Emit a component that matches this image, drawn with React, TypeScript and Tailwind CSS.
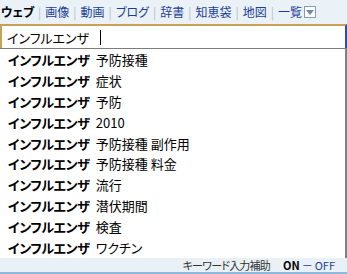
import React from 'react';

const tabs = ['画像', '動画', 'ブログ', '辞書', '知恵袋', '地図'];

const suggestions = [
  '予防接種',
  '症状',
  '予防',
  '2010',
  '予防接種 副作用',
  '予防接種 料金',
  '流行',
  '潜伏期間',
  '検査',
  'ワクチン',
];

const palt = { fontFeatureSettings: '"palt"' };

function Sep() {
  return <span className="mx-[4px] text-[#b8c0c8]">|</span>;
}

export default function App() {
  return (
    <div
      className="w-[347px] h-[274px] overflow-hidden bg-white text-black"
      style={{ fontFamily: '"Noto Sans CJK JP", "Noto Sans", sans-serif' }}
    >
      {/* tab bar */}
      <div className="h-[24px] bg-[#eaf1f7] flex items-center pl-[1px] text-[12px] leading-none whitespace-nowrap">
        <span className="font-bold" style={palt}>ウェブ</span>
        {tabs.map((t) => (
          <React.Fragment key={t}>
            <Sep />
            <span className="text-[#1b3e96]" style={palt}>{t}</span>
          </React.Fragment>
        ))}
        <Sep />
        <span className="text-[#1b3e96]">一覧</span>
        <span className="ml-[2px] shrink-0 w-[12px] h-[12px] border border-[#8a9cb0] bg-white flex items-center justify-center">
          <svg width="8" height="5" viewBox="0 0 8 5">
            <path d="M0 0 L8 0 L4 5 Z" fill="#6a8ab0" />
          </svg>
        </span>
      </div>

      {/* input */}
      <div className="h-[24px] border-t-2 border-l-2 border-r-2 border-t-[#c9a055] border-l-[#c9a055] border-r-[#3a4a9a] flex items-center pl-[5px] text-[13px] leading-none">
        <span style={palt}>インフルエンザ</span>
        <span className="ml-[11px] w-px h-[15px] bg-black" />
      </div>

      {/* suggestions */}
      <div className="h-[210px] border-t border-t-[#7c7c7c] border-r-2 border-r-[#808080] flex flex-col">
        {suggestions.map((s) => (
          <div key={s} className="h-[20.9px] flex items-center pl-[8px] text-[13px] leading-none whitespace-nowrap">
            <span className="font-bold tracking-[-0.4px]" style={palt}>インフルエンザ</span>
            <span className="ml-[6px]" style={palt}>{s}</span>
          </div>
        ))}
      </div>

      {/* footer */}
      <div className="h-[16px] bg-[#e9f1f7] border-b-2 border-b-[#8fb8e0] flex items-center justify-end pr-[12px] text-[11px] leading-none whitespace-nowrap">
        <span className="text-[#333] tracking-[-0.8px]" style={palt}>キーワード入力補助</span>
        <span className="ml-[13px] font-bold">ON</span>
        <span className="mx-[2px] text-[#1b3e96]">－</span>
        <span className="text-[#1b3e96]">OFF</span>
      </div>
    </div>
  );
}
